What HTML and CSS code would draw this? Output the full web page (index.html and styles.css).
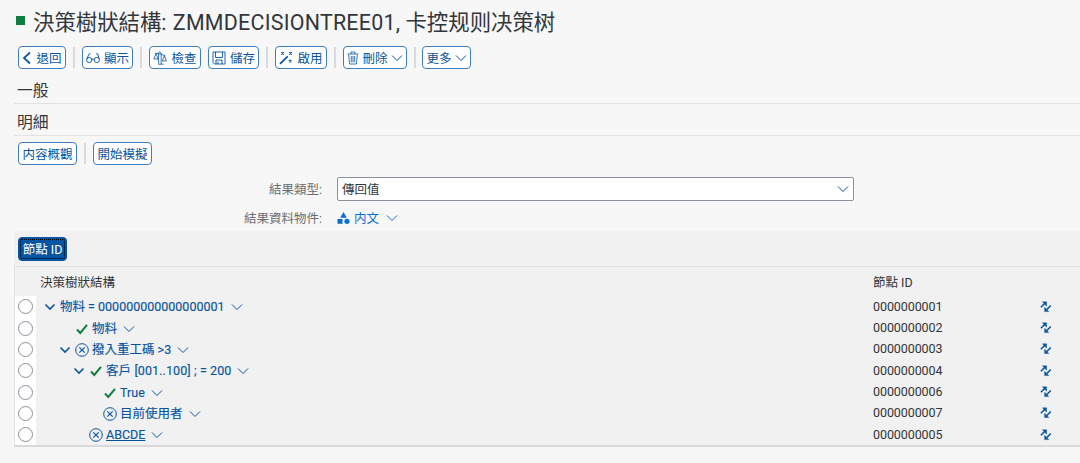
FILE: index.html
```html
<!DOCTYPE html>
<html lang="zh-TW">
<head>
  <meta charset="UTF-8" />
  <title>決策樹狀結構</title>
  <link rel="stylesheet" href="styles.css">
</head>
<body>

<!-- shared icons -->
<svg class="sprite" width="0" height="0">
  <symbol id="down" viewBox="0 0 12 12"><path d="M1 3.5 L6 8.5 L11 3.5" fill="none" stroke="currentColor"/></symbol>
  <symbol id="check" viewBox="0 0 12 12"><path d="M1 6.5 L4.3 10 L11 1.8" fill="none" stroke="currentColor" stroke-width="2"/></symbol>
  <symbol id="fold" viewBox="0 0 12 12"><path d="M1.5 3.5 L6 8 L10.5 3.5" fill="none" stroke="currentColor" stroke-width="1.6"/></symbol>
  <symbol id="cross" viewBox="0 0 14 14"><circle cx="7" cy="7" r="6.3" fill="none" stroke="currentColor"/><path d="M4.3 4.3 L9.7 9.7 M9.7 4.3 L4.3 9.7" stroke="currentColor" stroke-width="1.2"/></symbol>
  <symbol id="swap" viewBox="0 0 12 12"><path d="M.8 6.2 L4.6 2.6 M10.8 4.4 L6.6 8.8" fill="none" stroke="currentColor" stroke-width="1.5"/><path d="M2.4 .8 H6.6 V5.2 Z M4.6 6.2 V10.6 H8.8 Z" fill="currentColor" stroke="currentColor" stroke-width=".4"/></symbol>
</svg>

<header>
  <span class="status"></span>
  <h1>決策樹狀結構: <span class="name">ZMMDECISIONTREE01,</span> 卡控规则决策树</h1>
</header>

<div class="toolbar">
  <button class="back"><svg width="10" height="14" viewBox="0 0 10 14"><path d="M8 1.5 L2 7 L8 12.5" fill="none" stroke="currentColor" stroke-width="1.7"/></svg><span>退回</span></button>
  <i class="sep"></i>
  <button class="show"><svg width="14" height="12" viewBox="0 0 14 12"><g fill="none" stroke="currentColor" stroke-width=".9"><circle cx="3.2" cy="8" r="2.6"/><circle cx="10.8" cy="8" r="2.6"/><path d="M5.7 7.5 Q7 6.5 8.3 7.5 M.8 7 L3 2 Q3.5 1.2 4.5 1.8 M13.2 7 L11.8 2 Q11 1.2 10 1.8"/></g></svg><span>顯示</span></button>
  <i class="sep"></i>
  <button class="verify"><svg width="14" height="14" viewBox="0 0 14 14"><g fill="none" stroke="currentColor" stroke-width=".8"><path d="M5.6 1.5 V12.5 M8.2 2 V13 M5 13.2 H10.5 M2 2.2 L7 3 L12.5 4.8 M3 2.5 L.8 8 H5 Z M11.4 4.8 L9.2 10 H13.3 Z M5.6 1.5 Q7 0 8.2 2"/></g></svg><span>檢查</span></button>
  <button class="save"><svg width="14" height="14" viewBox="0 0 14 14"><g fill="none" stroke="currentColor" stroke-width=".9"><path d="M1 1 H13 V13 H2.5 L1 11.5 Z M3.5 1 V6.5 H10.5 V1 M4 13 V9 H10 V13 M6 10.5 V13"/></g></svg><span>儲存</span></button>
  <i class="sep"></i>
  <button class="activate"><svg width="14" height="14" viewBox="0 0 14 14"><path d="M1 12.8 L8.7 5.3" stroke="currentColor" stroke-width="1.8"/><path d="M2.4 1.2 L4.8 3.6 M4.8 1.2 L2.4 3.6 M10.4 1.2 L12.8 3.6 M12.8 1.2 L10.4 3.6 M10 9 L12.4 11.4 M12.4 9 L10 11.4" stroke="currentColor" stroke-width="1.2"/></svg><span>啟用</span></button>
  <i class="sep"></i>
  <button class="remove"><svg width="12" height="14" viewBox="0 0 12 14"><g fill="none" stroke="currentColor" stroke-width=".8"><path d="M.5 3 H11.5 M4 3 V1 H8 V3 M1.7 3.5 L2.5 13 H9.5 L10.3 3.5 M4.3 5 V11.3 M6 5 V11.3 M7.7 5 V11.3"/></g></svg><span>刪除</span><svg class="down"><use href="#down"/></svg></button>
  <i class="sep"></i>
  <button class="more"><span>更多</span><svg class="down"><use href="#down"/></svg></button>
</div>

<h2>一般</h2>
<h2 class="details">明細</h2>

<div class="toolbar detail-bar">
  <button class="overview"><span>内容概觀</span></button>
  <i class="sep"></i>
  <button class="simulate"><span>開始模擬</span></button>
</div>

<div class="form">
  <label>結果類型:</label>
  <div class="select"><span>傳回值</span><svg class="down"><use href="#down"/></svg></div>
  <label>結果資料物件:</label>
  <a class="object"><svg width="13" height="13" viewBox="0 0 13 13" fill="currentColor"><path d="M6.5 0 L9.8 5.8 H3.2 Z"/><rect x=".5" y="7" width="5" height="4.8"/><circle cx="10" cy="9.3" r="2.6"/></svg><span>内文</span><svg class="down"><use href="#down"/></svg></a>
</div>

<div class="tree-panel">
  <div class="tree-bar"><button class="node-id"><span>節點 ID</span></button></div>
  <table>
    <thead>
      <tr><th class="pick"></th><th>決策樹狀結構</th><th class="id">節點 ID</th><th class="move"></th></tr>
    </thead>
    <tbody>
      <tr>
        <td class="pick"><span class="radio"></span></td>
        <td><div class="node level-0"><svg class="fold"><use href="#fold"/></svg><a>物料 = 000000000000000001</a><svg class="down"><use href="#down"/></svg></div></td>
        <td class="id">0000000001</td>
        <td class="move"><svg><use href="#swap"/></svg></td>
      </tr>
      <tr>
        <td class="pick"><span class="radio"></span></td>
        <td><div class="node level-2 leaf"><svg class="yes"><use href="#check"/></svg><a>物料</a><svg class="down"><use href="#down"/></svg></div></td>
        <td class="id">0000000002</td>
        <td class="move"><svg><use href="#swap"/></svg></td>
      </tr>
      <tr>
        <td class="pick"><span class="radio"></span></td>
        <td><div class="node level-1"><svg class="fold"><use href="#fold"/></svg><svg class="no"><use href="#cross"/></svg><a>撥入重工碼 &gt;3</a><svg class="down"><use href="#down"/></svg></div></td>
        <td class="id">0000000003</td>
        <td class="move"><svg><use href="#swap"/></svg></td>
      </tr>
      <tr>
        <td class="pick"><span class="radio"></span></td>
        <td><div class="node level-2"><svg class="fold"><use href="#fold"/></svg><svg class="yes"><use href="#check"/></svg><a class="range">客戶 [001..100] ; = 200</a><svg class="down"><use href="#down"/></svg></div></td>
        <td class="id">0000000004</td>
        <td class="move"><svg><use href="#swap"/></svg></td>
      </tr>
      <tr>
        <td class="pick"><span class="radio"></span></td>
        <td><div class="node level-4"><svg class="yes"><use href="#check"/></svg><a>True</a><svg class="down"><use href="#down"/></svg></div></td>
        <td class="id">0000000006</td>
        <td class="move"><svg><use href="#swap"/></svg></td>
      </tr>
      <tr>
        <td class="pick"><span class="radio"></span></td>
        <td><div class="node level-4"><svg class="no"><use href="#cross"/></svg><a>目前使用者</a><svg class="down"><use href="#down"/></svg></div></td>
        <td class="id">0000000007</td>
        <td class="move"><svg><use href="#swap"/></svg></td>
      </tr>
      <tr>
        <td class="pick"><span class="radio"></span></td>
        <td><div class="node level-3"><svg class="no"><use href="#cross"/></svg><a class="linked">ABCDE</a><svg class="down"><use href="#down"/></svg></div></td>
        <td class="id">0000000005</td>
        <td class="move"><svg><use href="#swap"/></svg></td>
      </tr>
    </tbody>
  </table>
</div>

</body>
</html>
```
FILE: styles.css
```css
* {
  box-sizing: border-box;
}

body {
  margin: 0;
  padding-left: 14px;
  height: 463px;
  overflow: hidden;
  background: #f7f7f7;
  color: #32363a;
  font-family: Roboto, "Noto Sans CJK TC", "Noto Sans CJK SC", sans-serif;
  font-size: 12.5px;
  line-height: 18px;
}

svg {
  flex: none;
  display: block;
}

.sprite {
  position: absolute;
}

header {
  display: flex;
  align-items: center;
  height: 46px;
  padding-left: 2px;
}

.status {
  width: 9px;
  height: 9px;
  margin: 0 8px 5px 0;
  background: #107e3e;
}

h1 {
  margin: 0;
  font-size: 21.4px;
  font-weight: 400;
  line-height: 30px;
  white-space: nowrap;
}

h1 .name {
  margin-left: 1px;
  letter-spacing: 0.25px;
}

.toolbar {
  display: flex;
  align-items: center;
  height: 23px;
  padding-left: 4px;
}

button {
  display: flex;
  align-items: center;
  justify-content: center;
  height: 23px;
  padding: 0;
  gap: 4px;
  border: 1px solid #3f7fc0;
  border-radius: 4px;
  background: #fff;
  color: #0854a0;
  font: inherit;
  white-space: nowrap;
}

button span,
.select span,
.object span {
  padding-top: 2px;
}

.sep {
  width: 2px;
  height: 21px;
  margin: 0 7px;
  background: #dadada;
}

.down {
  width: 12px;
  height: 12px;
}

.back { width: 48px; }
.show { width: 51px; }
.verify { width: 52px; }
.save { width: 51px; margin-left: 7px; }
.activate { width: 52px; }
.remove { width: 64px; gap: 3px; }
.more { width: 49px; gap: 3px; margin-left: -1px; }

h2 {
  height: 35px;
  margin: 0;
  padding: 12px 0 0 3px;
  border-bottom: 1px solid #e2e2e2;
  font-size: 15.8px;
  font-weight: 400;
  line-height: 20px;
}

.details {
  height: 32px;
  padding-top: 9px;
}

.detail-bar {
  margin-top: 6px;
}

.overview, .simulate {
  width: 59px;
}

.form {
  display: grid;
  grid-template-columns: 308px 517px;
  column-gap: 15px;
  grid-template-rows: 24px 24px;
  row-gap: 5px;
  align-items: center;
  padding-top: 12px;
  height: 66px;
}

label {
  padding-top: 2px;
  color: #6a6d70;
  text-align: right;
}

.select {
  display: flex;
  align-items: center;
  justify-content: space-between;
  height: 24px;
  padding: 0 4px;
  border: 1px solid #89919a;
  border-radius: 2px;
  background: #fff;
}

.select .down {
  color: #0854a0;
}

.object {
  display: flex;
  align-items: center;
  gap: 4px;
  color: #0a6ed1;
}

.object .down {
  margin-left: 3px;
}

.tree-panel {
  background: #f1f1f1;
  border-bottom: 2px solid #d9d9d9;
}

.tree-bar {
  height: 35px;
  padding: 6px 0 0 4px;
}

.node-id {
  width: 49px;
  height: 24px;
  background: #0854a0;
  border-color: #0854a0;
  color: #fff;
  outline: 1px dotted #000;
  outline-offset: -3px;
}

table {
  width: 100%;
  border-collapse: separate;
  border-spacing: 0;
  table-layout: fixed;
  border-top: 1px solid #e2e2e2;
  border-left: 1px solid #e2e2e2;
}

th, td {
  height: 21.35px;
  padding: 0;
  font-weight: 400;
  text-align: left;
  white-space: nowrap;
}

th {
  height: 29px;
  padding-top: 2px;
}

.pick {
  width: 21px;
}

th:nth-child(2), td:nth-child(2) {
  padding-left: 4px;
}

td.pick {
  background: #fff;
}

.radio {
  display: block;
  width: 15px;
  height: 15px;
  margin-left: 3px;
  border: 1px solid #89919a;
  border-radius: 50%;
  background: #fff;
}

.id {
  width: 167px;
}

td.id {
  letter-spacing: -0.08px;
}

.move {
  width: 40px;
  color: #0854a0;
}

.move svg {
  width: 12px;
  height: 12px;
}

.node {
  display: flex;
  align-items: center;
  padding-top: 1px;
  color: #0854a0;
  -webkit-text-stroke: 0.15px #0854a0;
}

.node .down {
  margin-left: 6px;
}

.fold {
  width: 12px;
  height: 12px;
  margin-right: 4px;
}

.yes {
  width: 12px;
  height: 12px;
  margin-right: 4px;
  color: #107e3e;
}

.fold + .yes {
  margin-left: 1px;
}

.no {
  width: 14px;
  height: 14px;
  margin-right: 3px;
}

.range {
  letter-spacing: 0.1px;
}

.linked {
  text-decoration: underline;
}

.level-0 { padding-left: 4px; }
.level-1 { padding-left: 19px; }
.level-2 { padding-left: 33px; }
.level-2.leaf { padding-left: 36px; }
.level-3 { padding-left: 49px; }
.level-4 { padding-left: 64px; }
.level-4 .no { margin-left: -1px; }
```
